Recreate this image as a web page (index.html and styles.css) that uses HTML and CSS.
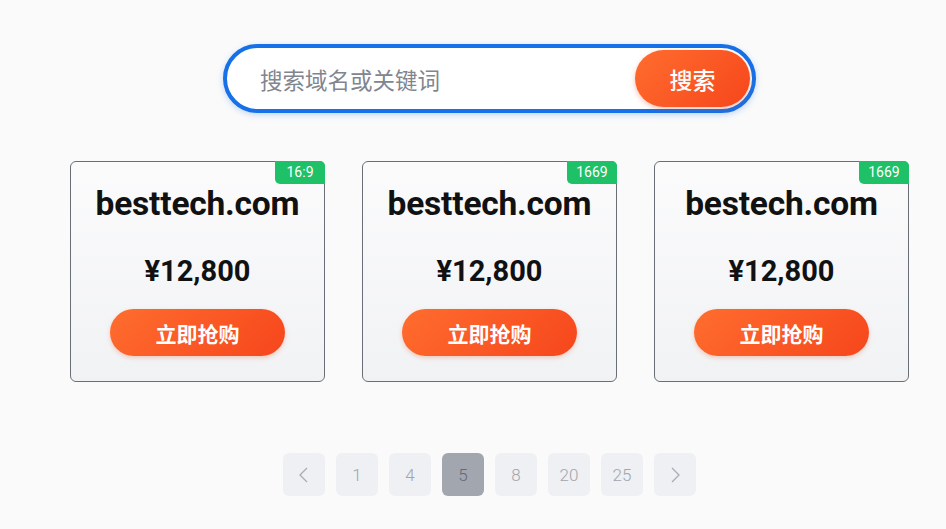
FILE: index.html
```html
<!DOCTYPE html>
<html>
  <head>
    <meta charset="utf-8" />
    <title>域名搜索</title>
    <link rel="stylesheet" href="styles.css">
  </head>
  <body>
    <main class="page">
      <form class="search-bar" onsubmit="return false">
        <input class="search-input" type="text" placeholder="搜索域名或关键词">
        <button class="search-button" type="submit">搜索</button>
      </form>

      <section class="card-list">
        <div class="card">
          <span class="badge">16:9</span>
          <div class="domain">besttech.com</div>
          <div class="price">¥12,800</div>
          <button class="buy-button">立即抢购</button>
        </div>
        <div class="card">
          <span class="badge">1669</span>
          <div class="domain">besttech.com</div>
          <div class="price">¥12,800</div>
          <button class="buy-button">立即抢购</button>
        </div>
        <div class="card">
          <span class="badge">1669</span>
          <div class="domain">bestech.com</div>
          <div class="price">¥12,800</div>
          <button class="buy-button">立即抢购</button>
        </div>
      </section>

      <nav class="pager">
        <a class="pager-item">
          <svg width="14" height="20" viewBox="0 0 14 20"><path d="M10 3 L3 10 L10 17" fill="none" stroke="#a7acb5" stroke-width="1.3"/></svg>
        </a>
        <a class="pager-item">1</a>
        <a class="pager-item">4</a>
        <a class="pager-item active">5</a>
        <a class="pager-item">8</a>
        <a class="pager-item">20</a>
        <a class="pager-item">25</a>
        <a class="pager-item">
          <svg width="14" height="20" viewBox="0 0 14 20"><path d="M4 3 L11 10 L4 17" fill="none" stroke="#a7acb5" stroke-width="1.3"/></svg>
        </a>
      </nav>
    </main>
  </body>
</html>
```

FILE: styles.css
```css
body {
  margin: 0;
  background-color: #fafafa;
  font-family: Roboto, "Noto Sans CJK SC", sans-serif;
}
.page {
  width: 839px;
  margin-left: 70px;
  padding-top: 44px;
  display: flex;
  flex-direction: column;
  align-items: center;
}
.search-bar {
  box-sizing: border-box;
  width: 533px;
  height: 69px;
  border: 4px solid #1670e8;
  border-radius: 35px;
  background: #fff;
  display: flex;
  align-items: center;
  padding: 0 2px 0 31px;
  box-shadow: 0 2px 6px rgba(22, 112, 232, 0.25);
}
.search-input {
  flex: 1;
  border: none;
  outline: none;
  background: transparent;
  font-family: "Noto Sans CJK SC", sans-serif;
  font-size: 22.5px;
  color: #333;
}
.search-input::placeholder {
  color: #80858f;
}
.search-button {
  width: 115px;
  height: 57px;
  border: none;
  border-radius: 29px;
  background: linear-gradient(135deg, #ff6d2e, #f6461c);
  color: #fff;
  font-family: "Noto Sans CJK SC", sans-serif;
  font-size: 23px;
  font-weight: 500;
  box-shadow: 0 2px 5px rgba(230, 80, 30, 0.35);
}
.card-list {
  margin-top: 48px;
  display: flex;
  gap: 37px;
}
.card {
  position: relative;
  box-sizing: border-box;
  width: 255px;
  height: 221px;
  border: 1.5px solid #6a6f77;
  border-radius: 6px;
  background: linear-gradient(180deg, #fbfbfc, #f1f2f4);
  display: flex;
  flex-direction: column;
  align-items: center;
  padding-top: 23px;
}
.badge {
  position: absolute;
  top: -1px;
  right: -1px;
  width: 50px;
  height: 23px;
  background: #1ec068;
  border-radius: 0 5px 0 5px;
  color: #fff;
  font-size: 14px;
  line-height: 23px;
  text-align: center;
}
.domain {
  font-size: 33.5px;
  font-weight: 700;
  color: #111;
  letter-spacing: -0.2px;
  line-height: 38px;
}
.price {
  margin-top: 31px;
  font-size: 29px;
  font-weight: 700;
  color: #111;
  line-height: 34px;
}
.buy-button {
  margin-top: 21px;
  width: 175px;
  height: 47px;
  border: none;
  border-radius: 24px;
  background: linear-gradient(135deg, #ff6d2e, #f6461c);
  color: #fff;
  font-family: "Noto Sans CJK SC", sans-serif;
  font-size: 21px;
  font-weight: 700;
  box-shadow: 0 2px 4px rgba(230, 80, 30, 0.25);
}
.pager {
  margin-top: 71px;
  display: flex;
  gap: 11px;
}
.pager-item {
  width: 42px;
  height: 43px;
  border-radius: 6px;
  background: #eef0f3;
  color: #a0a5ae;
  font-size: 17px;
  font-weight: 300;
  display: flex;
  align-items: center;
  justify-content: center;
}
.pager-item.active {
  background: #a2a6ae;
  color: #646a75;
}
```
